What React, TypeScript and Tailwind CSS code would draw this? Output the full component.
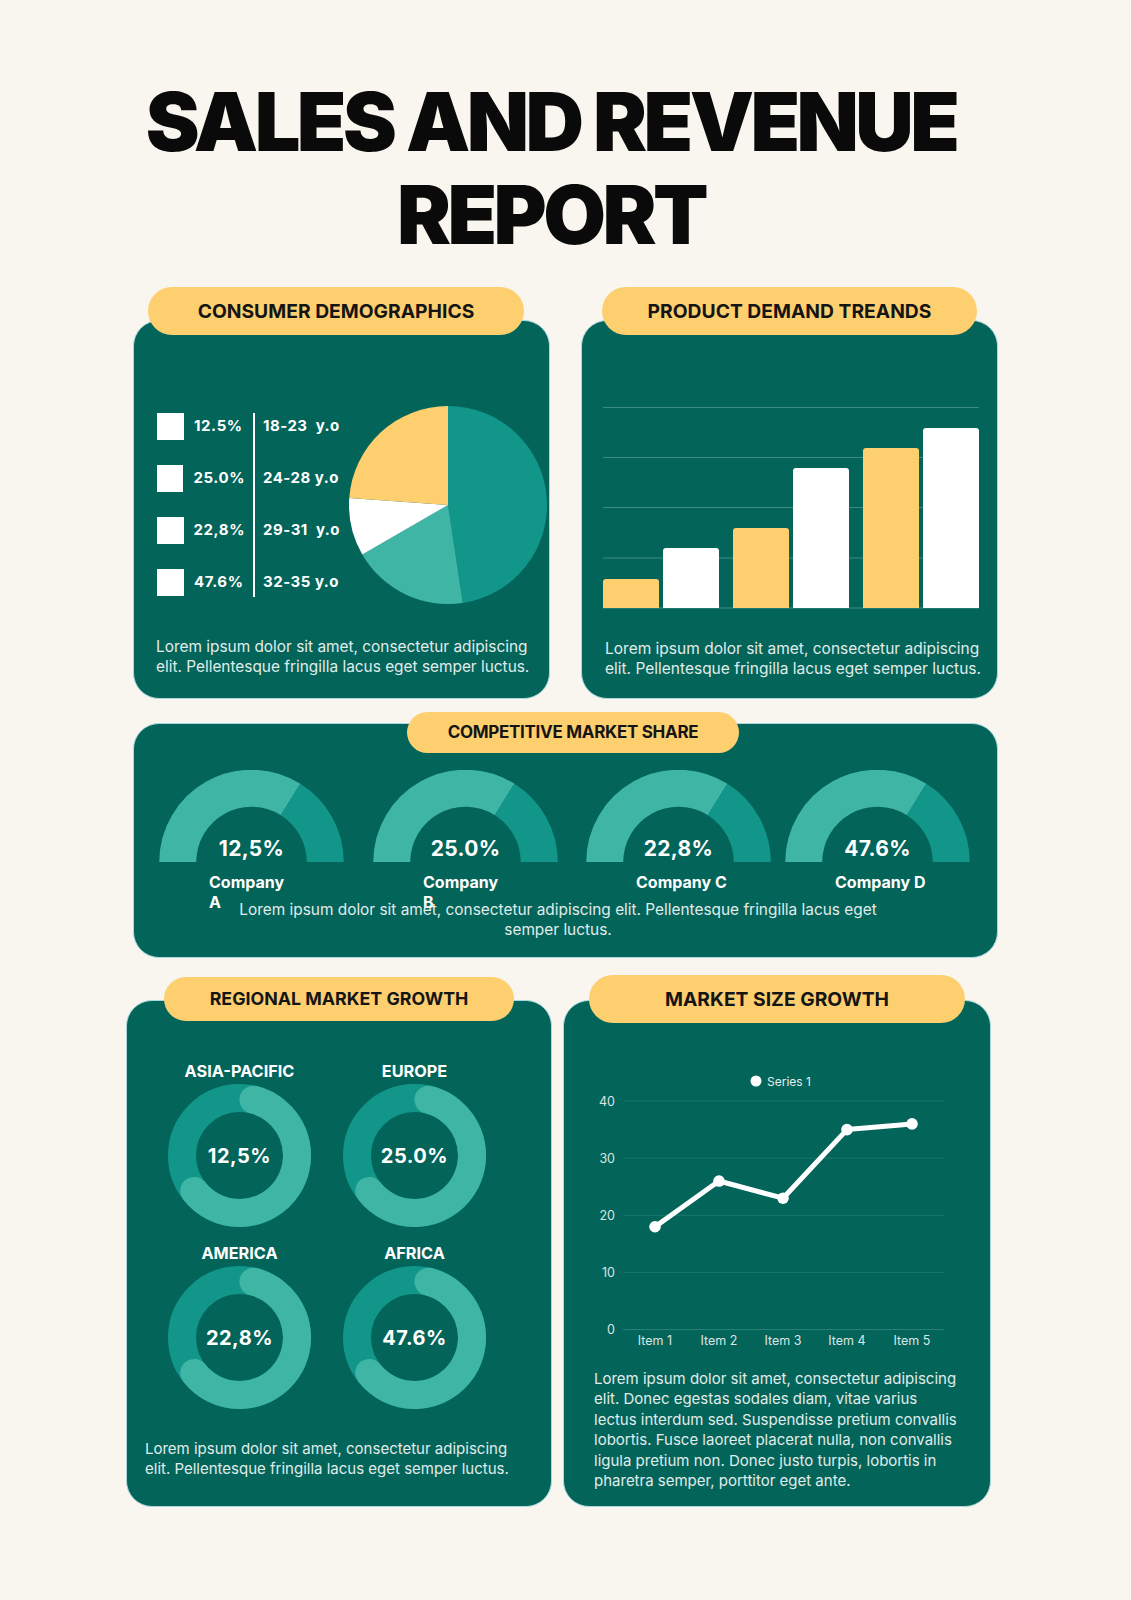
import React from "react";

const polar = (cx: number, cy: number, r: number, a: number): [number, number] => {
  const rad = (a * Math.PI) / 180;
  return [cx + r * Math.sin(rad), cy - r * Math.cos(rad)];
};
const arcPath = (cx: number, cy: number, r: number, a0: number, a1: number) => {
  const [x0, y0] = polar(cx, cy, r, a0);
  const [x1, y1] = polar(cx, cy, r, a1);
  const large = a1 - a0 > 180 ? 1 : 0;
  return `M ${x0} ${y0} A ${r} ${r} 0 ${large} 1 ${x1} ${y1}`;
};
const slicePath = (cx: number, cy: number, r: number, a0: number, a1: number) => {
  const [x0, y0] = polar(cx, cy, r, a0);
  const [x1, y1] = polar(cx, cy, r, a1);
  const large = a1 - a0 > 180 ? 1 : 0;
  return `M ${cx} ${cy} L ${x0} ${y0} A ${r} ${r} 0 ${large} 1 ${x1} ${y1} Z`;
};

const DARK = "#12968a";
const LIGHT = "#3fb5a5";
const YELLOW = "#fecf6f";

function Pie() {
  return (
    <svg width="200" height="200" viewBox="0 0 200 200" className="shrink-0">
      <path d={slicePath(100, 100, 99, 0, 171.4)} fill={DARK} />
      <path d={slicePath(100, 100, 99, 171.4, 240)} fill={LIGHT} />
      <path d={slicePath(100, 100, 99, 240, 274)} fill="#ffffff" />
      <path d={slicePath(100, 100, 99, 274, 360)} fill={YELLOW} />
    </svg>
  );
}

function BarChart() {
  const bars = [
    { x: 0, h: 29, c: YELLOW },
    { x: 60, h: 60, c: "#ffffff" },
    { x: 130, h: 80, c: YELLOW },
    { x: 190, h: 140, c: "#ffffff" },
    { x: 260, h: 160, c: YELLOW },
    { x: 320, h: 180, c: "#ffffff" },
  ];
  const base = 201;
  return (
    <svg width="376" height="202" viewBox="0 0 376 202" className="block">
      {[0.5, 50.5, 100.5, 151, 201].map((y) => (
        <line key={y} x1="0" x2="376" y1={y} y2={y} stroke="#3f8c83" strokeWidth="1" />
      ))}
      {bars.map((b) => {
        const t = base - b.h;
        const r = 3;
        const d = `M ${b.x} ${base} L ${b.x} ${t + r} Q ${b.x} ${t} ${b.x + r} ${t} L ${b.x + 56 - r} ${t} Q ${b.x + 56} ${t} ${b.x + 56} ${t + r} L ${b.x + 56} ${base} Z`;
        return <path key={b.x} d={d} fill={b.c} />;
      })}
    </svg>
  );
}

function Gauge({ value }: { value: string }) {
  return (
    <div className="relative w-[185px] h-[92px] shrink-0">
      <svg width="185" height="92" viewBox="0 0 185 92" className="block">
        <path d={arcPath(92.5, 92, 73.75, -90, 32)} stroke={LIGHT} strokeWidth="37" fill="none" />
        <path d={arcPath(92.5, 92, 73.75, 32, 90)} stroke={DARK} strokeWidth="37" fill="none" />
      </svg>
      <div className="absolute left-0 right-0 bottom-[0px] h-[26px] leading-[26px] text-center text-white font-bold text-[21px] tracking-[0.3px]">
        {value}
      </div>
    </div>
  );
}

function Donut({ value }: { value: string }) {
  return (
    <div className="relative w-[143px] h-[143px]">
      <svg width="143" height="143" viewBox="0 0 143 143" className="block">
        <circle cx="71.5" cy="71.5" r="57.5" stroke={DARK} strokeWidth="28" fill="none" />
        <path d={arcPath(71.5, 71.5, 57.5, 14, 232)} stroke={LIGHT} strokeWidth="28" fill="none" strokeLinecap="round" />
      </svg>
      <div className="absolute inset-0 flex items-center justify-center text-white font-bold text-[20px] tracking-[0.5px]">
        {value}
      </div>
    </div>
  );
}

function LineChart() {
  const unit = 5.714;
  const zero = 266.6;
  const ys = [40, 30, 20, 10, 0].map((v) => ({ v: String(v), y: zero - v * unit }));
  const xs = [85, 149, 213, 277, 342];
  const data = [18, 26, 23, 35, 36];
  const pts = data.map((v, i) => [xs[i], zero - v * unit] as [number, number]);
  return (
    <svg width="390" height="290" viewBox="0 0 390 290" className="block">
      <circle cx="186" cy="18" r="5.5" fill="#ffffff" />
      <text x="197" y="22.5" fontSize="12" fill="#e4efed" fontFamily="Inter, sans-serif">
        Series 1
      </text>
      {ys.map((g) => (
        <g key={g.v}>
          <line x1="53" x2="374" y1={g.y} y2={g.y} stroke={g.v === "0" ? "#2a8379" : "#1a776c"} strokeWidth="1" />
          <text x="45" y={g.y + 4.5} fontSize="12.5" fill="#d8e6e3" textAnchor="end" fontFamily="Inter, sans-serif">
            {g.v}
          </text>
        </g>
      ))}
      {xs.map((x, i) => (
        <text key={x} x={x} y={zero + 15.5} fontSize="12.5" fill="#d8e6e3" textAnchor="middle" fontFamily="Inter, sans-serif">
          {`Item ${i + 1}`}
        </text>
      ))}
      <polyline
        points={pts.map((p) => p.join(",")).join(" ")}
        fill="none"
        stroke="#ffffff"
        strokeWidth="5"
        strokeLinejoin="round"
      />
      {pts.map((p, i) => (
        <circle key={i} cx={p[0]} cy={p[1]} r="5.8" fill="#ffffff" />
      ))}
    </svg>
  );
}

const CARD = "bg-[#03645a] border-[1.5px] border-[#a9d9dc] rounded-[26px] relative";
const PILL =
  "relative z-10 bg-[#fecf6f] rounded-full flex items-center justify-center text-[#151515] font-bold whitespace-nowrap";
const LOREM = "text-[#e1ecea] text-[15.4px] leading-[20px] whitespace-nowrap";

export default function App() {
  const legend = [
    ["12.5%", "18-23  y.o"],
    ["25.0%", "24-28 y.o"],
    ["22,8%", "29-31  y.o"],
    ["47.6%", "32-35 y.o"],
  ];
  return (
    <div className="min-h-[1600px] w-[1131px] bg-[#f9f5ef] font-['Inter',sans-serif] flex flex-col">
      {/* Title */}
      <div className="pt-[76px] pr-[29px] text-center text-[#0a0a0a] font-black text-[81px] leading-[93px] tracking-[-0.044em]">
        SALES AND REVENUE
        <br />
        REPORT
      </div>

      {/* Row 1 */}
      <div className="flex pl-[133px] gap-[31px] mt-[25px]">
        <div className="w-[417px] flex flex-col">
          <div className={`${PILL} ml-[15px] w-[376px] h-[48px] text-[19.3px]`}>CONSUMER DEMOGRAPHICS</div>
          <div className={`${CARD} -mt-[15px] h-[379px]`}>
            <div className="flex items-start pl-[23px] pt-[84px]">
              <div className="flex mt-[8px]">
                <div className="flex flex-col gap-[25px] w-[88px]">
                  {legend.map((l) => (
                    <div key={l[0]} className="flex items-center h-[27px] gap-[10px]">
                      <div className="w-[27px] h-[27px] bg-white" />
                      <span className="text-white font-bold text-[15px] tracking-[0.6px]">{l[0]}</span>
                    </div>
                  ))}
                </div>
                <div className="ml-[8px] w-[2px] h-[184px] bg-white" />
                <div className="ml-[8px] w-[85px] flex flex-col gap-[25px]">
                  {legend.map((l) => (
                    <div key={l[1]} className="h-[27px] flex items-center text-white font-bold text-[15px] tracking-[0.5px] whitespace-pre">
                      {l[1]}
                    </div>
                  ))}
                </div>
              </div>
              <Pie />
            </div>
            <div className={`${LOREM} mt-[32px] pl-[22px]`}>
              Lorem ipsum dolor sit amet, consectetur adipiscing
              <br />
              elit. Pellentesque fringilla lacus eget semper luctus.
            </div>
          </div>
        </div>

        <div className="w-[417px] flex flex-col">
          <div className={`${PILL} ml-[21px] w-[375px] h-[48px] text-[19.3px]`}>PRODUCT DEMAND TREANDS</div>
          <div className={`${CARD} -mt-[15px] h-[379px]`}>
            <div className="pl-[21px] pt-[86px]">
              <BarChart />
            </div>
            <div className={`${LOREM} mt-[30px] pl-[23px] text-[15.5px]`}>
              Lorem ipsum dolor sit amet, consectetur adipiscing
              <br />
              elit. Pellentesque fringilla lacus eget semper luctus.
            </div>
          </div>
        </div>
      </div>

      {/* Row 2 */}
      <div className="pl-[133px] mt-[13px]">
        <div className="w-[865px] flex flex-col">
          <div className={`${PILL} ml-[274px] w-[332px] h-[41px] text-[17px] tracking-[-0.3px]`}>
            COMPETITIVE MARKET SHARE
          </div>
          <div className={`${CARD} -mt-[30px] h-[235px]`}>
            <div className="flex pl-[25px] pt-[46px]">
              {[
                { v: "12,5%", l1: "Company", l2: "A", ml: "ml-0" },
                { v: "25.0%", l1: "Company", l2: "B", ml: "ml-[29px]" },
                { v: "22,8%", l1: "Company C", l2: "", ml: "ml-[28px]" },
                { v: "47.6%", l1: "Company D", l2: "", ml: "ml-[14px]" },
              ].map((g) => (
                <div key={g.v} className={`${g.ml} flex flex-col w-[185px]`}>
                  <Gauge value={g.v} />
                  <div className="mt-[10px] h-[20px] pl-[50px] text-white font-bold text-[16px] leading-[20px] whitespace-nowrap">
                    {g.l1}
                    {g.l2 && (
                      <>
                        <br />
                        {g.l2}
                      </>
                    )}
                  </div>
                </div>
              ))}
            </div>
            <div className="mt-[8px] ml-[89px] w-[670px] text-center text-[#e1ecea] text-[15.4px] leading-[20px] whitespace-nowrap">
              Lorem ipsum dolor sit amet, consectetur adipiscing elit. Pellentesque fringilla lacus eget
              <br />
              semper luctus.
            </div>
          </div>
        </div>
      </div>

      {/* Row 3 */}
      <div className="flex pl-[126px] gap-[11px] mt-[17px] items-start">
        <div className="w-[426px] flex flex-col mt-[2px]">
          <div className={`${PILL} ml-[38px] w-[350px] h-[44px] text-[17.8px]`}>REGIONAL MARKET GROWTH</div>
          <div className={`${CARD} -mt-[21px] h-[507px]`}>
            <div className="pt-[60px] pl-[41px] grid grid-cols-[143px_143px] gap-x-[32px] gap-y-[16px]">
              {[
                ["ASIA-PACIFIC", "12,5%"],
                ["EUROPE", "25.0%"],
                ["AMERICA", "22,8%"],
                ["AFRICA", "47.6%"],
              ].map((d) => (
                <div key={d[0]} className="flex flex-col items-center">
                  <div className="h-[20px] leading-[20px] text-white font-bold text-[16.3px] whitespace-nowrap">{d[0]}</div>
                  <div className="mt-[3px]">
                    <Donut value={d[1]} />
                  </div>
                </div>
              ))}
            </div>
            <div className="mt-[30px] pl-[18px] text-[#e1ecea] text-[15px] leading-[20px] whitespace-nowrap">
              Lorem ipsum dolor sit amet, consectetur adipiscing
              <br />
              elit. Pellentesque fringilla lacus eget semper luctus.
            </div>
          </div>
        </div>

        <div className="w-[428px] flex flex-col">
          <div className={`${PILL} ml-[26px] w-[376px] h-[48px] text-[19.3px]`}>MARKET SIZE GROWTH</div>
          <div className={`${CARD} -mt-[23px] h-[507px]`}>
            <div className="pl-[6px] pt-[62px]">
              <LineChart />
            </div>
            <div className="mt-[16px] pl-[30px] text-[#e1ecea] text-[15px] leading-[20.4px] whitespace-nowrap">
              Lorem ipsum dolor sit amet, consectetur adipiscing
              <br />
              elit. Donec egestas sodales diam, vitae varius
              <br />
              lectus interdum sed. Suspendisse pretium convallis
              <br />
              lobortis. Fusce laoreet placerat nulla, non convallis
              <br />
              ligula pretium non. Donec justo turpis, lobortis in
              <br />
              pharetra semper, porttitor eget ante.
            </div>
          </div>
        </div>
      </div>
    </div>
  );
}
